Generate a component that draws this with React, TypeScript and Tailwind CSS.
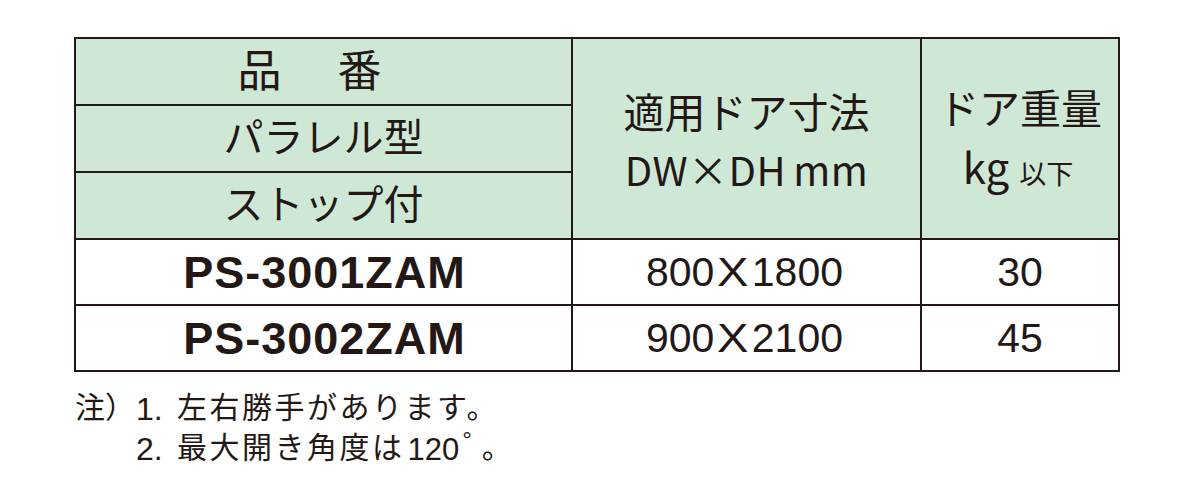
import React from "react";

const jp = "font-['Noto_Sans_CJK_JP','Noto_Sans',sans-serif]";
const lat = "font-['Liberation_Sans','Noto_Sans_CJK_JP',sans-serif]";

export default function App() {
  return (
    <div className="w-[1200px] h-[489px] bg-white text-[#231815] pt-[37px] pl-[74px]">
      <table className="table-fixed border-collapse w-[1044px] border-2 border-[#231815]">
        <colgroup>
          <col className="w-[497px]" />
          <col className="w-[349px]" />
          <col className="w-[198px]" />
        </colgroup>
        <tbody>
          <tr className="h-[67px] bg-[#cfe8d6]">
            <td className={`border-2 border-[#231815] text-center text-[44px] leading-none ${jp}`}>
              <div className="flex justify-center gap-[56px] pr-[28px] pb-[8px]">
                <span>品</span>
                <span>番</span>
              </div>
            </td>
            <td rowSpan={3} className={`border-2 border-[#231815] text-center ${jp}`}>
              <div className="flex flex-col items-center pt-[2px]">
                <div className="text-[41px] leading-[59px]">適用ドア寸法</div>
                <div className="text-[40px] leading-[59px] tracking-[0.5px]">DW×DH<span className="ml-[7px]">mm</span></div>
              </div>
            </td>
            <td rowSpan={3} className={`border-2 border-[#231815] text-center ${jp}`}>
              <div className="flex flex-col items-center pt-[2px]">
                <div className="text-[41px] leading-[59px]">ドア重量</div>
                <div className="leading-[59px] flex items-baseline justify-center pr-[4px]">
                  <span className="text-[42px]">kg</span>
                  <span className="text-[27px] ml-[10px]">以下</span>
                </div>
              </div>
            </td>
          </tr>
          <tr className="h-[67px] bg-[#cfe8d6]">
            <td className={`border-2 border-[#231815] text-center text-[40px] leading-none ${jp}`}>
              <div className="pb-[8px]">パラレル型</div>
            </td>
          </tr>
          <tr className="h-[67px] bg-[#cfe8d6]">
            <td className={`border-2 border-[#231815] text-center text-[40px] leading-none ${jp}`}>
              <div className="pb-[8px]">ストップ付</div>
            </td>
          </tr>
          {[
            ["PS-3001ZAM", "800", "1800", "30"],
            ["PS-3002ZAM", "900", "2100", "45"],
          ].map(([code, w, h, kg]) => (
            <tr key={code} className="h-[66px] bg-white">
              <td className={`border-2 border-[#231815] text-center text-[45px] tracking-[1px] font-bold leading-none ${lat}`}>
                <span className="inline-block pl-[2px]">{code}</span>
              </td>
              <td className={`border-2 border-[#231815] text-center text-[41px] leading-none ${lat}`}>
                <span className="inline-block pr-[4px]">
                  {w}
                  <span className="inline-block scale-x-[1.15] mx-[5px]">X</span>
                  {h}
                </span>
              </td>
              <td className={`border-2 border-[#231815] text-center text-[41px] leading-none ${lat}`}>
                <span className="inline-block">{kg}</span>
              </td>
            </tr>
          ))}
        </tbody>
      </table>
      <div className={`mt-[13px] text-[30px] leading-[40px] ${jp}`}>
        <div className="flex items-baseline h-[40px]">
          <span className="w-[62px] pl-[1px]">注）</span>
          <span className={`${lat} text-[32px] w-[41px] relative top-[2px]`}>1.</span>
          <span className="tracking-[2.5px]">左右勝手があります。</span>
        </div>
        <div className="flex items-baseline h-[40px]">
          <span className="w-[62px]"></span>
          <span className={`${lat} text-[32px] w-[41px] relative top-[2px]`}>2.</span>
          <span className="tracking-[2.5px]">最大開き角度は</span>
          <span className={`${lat} text-[31px] ml-[3px] relative top-[2px]`}>120</span>
          <span className={`${lat} text-[24px] leading-none self-start mt-[3px] ml-[3px]`}>°</span>
          <span className="ml-[10px]">。</span>
        </div>
      </div>
    </div>
  );
}
